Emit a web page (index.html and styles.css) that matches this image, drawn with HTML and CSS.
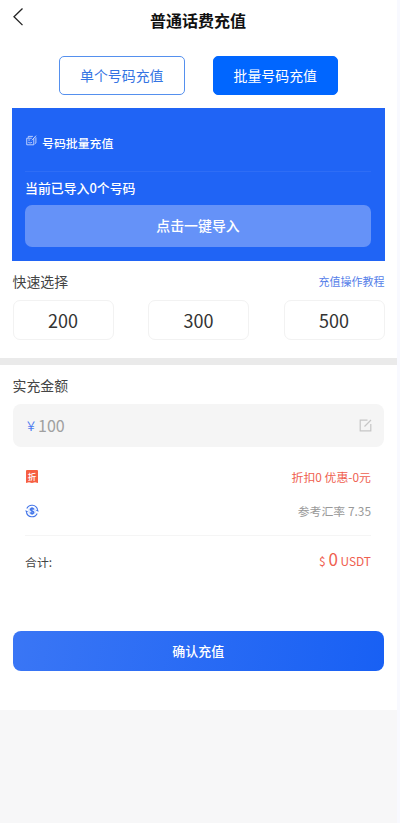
FILE: index.html
```html
<!DOCTYPE html>
<html lang="zh-CN">
<head>
<meta charset="utf-8">
<title>普通话费充值</title>
<link rel="stylesheet" href="styles.css">
</head>
<body>
<div class="screen">
  <main class="page">
    <header class="header">
      <svg class="back" viewBox="0 0 12 20" width="12" height="20"><path d="M10.5 1.500 2 9.800l8.500 8.300" fill="none" stroke="#222" stroke-width="1.300"/></svg>
      <h1 class="title">普通话费充值</h1>
    </header>
    <nav class="tabs">
      <button class="tab">单个号码充值</button>
      <button class="tab tab-active">批量号码充值</button>
    </nav>
    <section class="batch">
      <div class="batch-head">
        <svg viewBox="0 0 12 12" width="11" height="11" fill="none" stroke="#dce6ff" stroke-width=".9"><path d="M2.500 3V1.500h5M8.500 3.500v7.200H.8V3.500h5.500M10.800 2.500v6.200l-1.300 1M11 .7 6.500 5.800M2.500 5.500h2M2.500 8c1.500.8 2.800.8 4 0"/></svg>
        <span>号码批量充值</span>
      </div>
      <p class="batch-count">当前已导入0个号码</p>
      <button class="import">点击一键导入</button>
    </section>
    <section class="quick">
      <div class="quick-head"><h2 class="label">快速选择</h2><a class="guide">充值操作教程</a></div>
      <div class="amounts">
        <button class="amount">200</button>
        <button class="amount">300</button>
        <button class="amount">500</button>
      </div>
    </section>
    <section class="pay">
      <h2 class="label">实充金额</h2>
      <div class="field">
        <span class="yen">￥</span><span class="value">100</span>
        <svg class="edit" viewBox="0 0 13 13" width="13" height="13" fill="none" stroke="#c6c6c6" stroke-width="1.200"><path d="M8.500 1.200H1.200v10.600h10.600V5M12 1 5.500 7.500"/></svg>
      </div>
      <div class="rows">
        <div class="row">
          <svg viewBox="0 0 12 13" width="12" height="13"><path d="M0 1Q0 0 1 0h10Q12 0 12 1V13L9 12.200 6 13 3 12.200 0 13Z" fill="#f65f42"/><text class="badge-text" x="6" y="9.500" text-anchor="middle">折</text></svg>
          <span class="discount">折扣0 优惠-0元</span>
        </div>
        <div class="row row-rate">
          <svg viewBox="0 0 14 14" width="14" height="14" fill="none" stroke="#4274e8"><path d="M1.800 4.500A5.700 5.700 0 0 1 12.500 5.500M12.200 9.500A5.700 5.700 0 0 1 1.500 8.500" stroke-width="1.100"/><path d="M.3 6.200 1.300 9.200 3 7.300ZM13.700 7.800 12.700 4.800 11 6.700Z" fill="#4274e8" stroke="none"/><circle cx="7" cy="7" r="4" fill="#dce8ff" stroke="none"/><path d="M8.900 5.400C8.300 4 5.300 4.100 5.300 5.600 5.300 7.200 8.800 6.700 8.800 8.400 8.800 10 5.700 9.900 5.100 8.500M7 3.300v7.400" stroke-width="1.300"/></svg>
          <span class="rate">参考汇率 7.35</span>
        </div>
        <div class="row total">
          <span>合计:</span>
          <span class="sum">$ <b>0</b> USDT</span>
        </div>
      </div>
      <button class="confirm">确认充值</button>
    </section>
  </main>
</div>
</body>
</html>
```

FILE: styles.css
```css
* { box-sizing: border-box; margin: 0; padding: 0; }
body {
  background: #f8f9ff;
  font-family: "Noto Sans CJK SC", sans-serif;
  color: #444;
}
button { font: inherit; border: 0; background: none; color: inherit; display: block; }
h1, h2 { font-weight: 400; }
svg { display: block; flex: none; }
.screen { width: 397px; height: 823px; background: #f7f7f8; }
.page { height: 710px; background: #fff; }
.header {
  height: 40px;
  display: grid;
  grid-template-columns: 30px 1fr 30px;
  align-items: center;
}
.back { margin: -6px 0 0 12px; }
.title { padding-right: 1px; text-align: center; font-size: 16px; line-height: 24px; font-weight: 700; color: #111; }
.tabs { display: flex; gap: 28px; padding: 16px 59px 0; height: 68px; }
.tab {
  flex: 1;
  height: 39px;
  border: 1px solid #5590ee;
  border-radius: 5px;
  font-size: 13.9px;
  line-height: 37px;
  color: #3474e3;
}
.tab-active { background: #0066ff; border-color: #0066ff; color: #fff; }
.batch {
  height: 152.500px;
  margin: 0 12px 0 11.500px;
  padding: 0 14px 0 13.500px;
  background: #2064f5;
  color: #fff;
}
.batch-head {
  display: flex;
  align-items: center;
  gap: 5px;
  height: 64px;
  padding: 6px 0 0 1px;
  border-bottom: 1px solid #2e6df6;
  font-size: 11.9px;
  font-weight: 500;
}
.batch-head svg { margin-top: -4px; }
.batch-count { height: 33px; font-size: 12.900px; line-height: 31px; font-weight: 500; }
.import {
  width: 100%;
  height: 42px;
  padding-bottom: 2px;
  border-radius: 7px;
  background: #6592f8;
  font-size: 13.900px;
  font-weight: 500;
}
.quick { height: 104.500px; padding: 10.500px 12.500px 0 12.500px; border-bottom: 7px solid #eaeaea; }
.quick-head { display: flex; align-items: center; justify-content: space-between; height: 20px; margin-bottom: 8.500px; }
.label { font-size: 13.900px; line-height: 20px; color: #444; }
.guide { font-size: 11px; color: #5680e9; }
.amounts { display: flex; justify-content: space-between; }
.amount {
  width: 101px;
  height: 40px;
  border: 1px solid #f2f2f2;
  border-radius: 7px;
  font-size: 18px;
  color: #333;
}
.pay { padding: 10px 13px 0 12.500px; }
.field {
  display: flex;
  align-items: center;
  height: 43px;
  margin-top: 9px;
  padding: 0 12.500px;
  border-radius: 8px;
  background: #f5f5f5;
}
.yen { width: 13px; font-size: 12px; color: #4d7cf0; }
.value { padding-bottom: 1px; font-size: 16px; color: #a0a0a0; }
.edit { margin-left: auto; }
.rows { padding: 12px 13px 0 12.500px; }
.row { display: flex; align-items: center; justify-content: space-between; height: 35px; font-size: 11.900px; }
.row svg { margin-left: 1px; }
.row span { margin-top: -1px; }
.row-rate { height: 41px; padding-bottom: 7px; }
.row-rate svg { margin-left: 0; }
.badge-text { font-size: 8.500px; font-weight: 500; fill: #fff; }
.discount, .sum { color: #ef604f; }
.rate { color: #999; }
.total { height: 52px; border-top: 1px solid #f5f5f5; }
.row .sum { margin-top: -4px; line-height: 24px; }
.sum b { font-size: 17px; font-weight: 400; }
.confirm {
  width: 100%;
  height: 40px;
  padding-bottom: 2px;
  margin-top: 44px;
  border-radius: 8px;
  background: linear-gradient(100deg, #3a76f5, #1860f4);
  font-size: 13px;
  font-weight: 500;
  color: #fff;
}
```
